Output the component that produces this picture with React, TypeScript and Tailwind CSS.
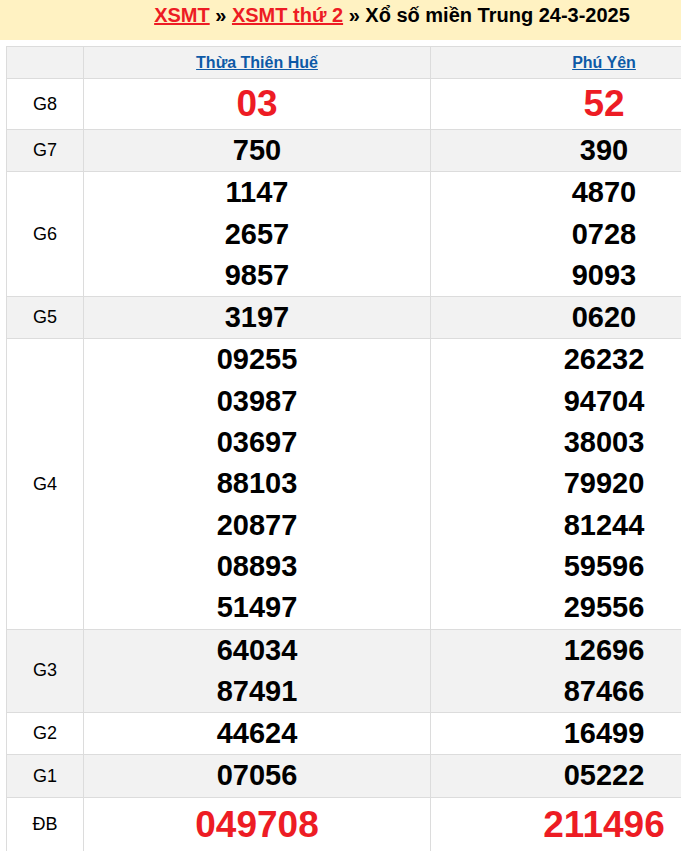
type Prize = {
  label: string;
  hue: [string[], string[]];
  big?: "g8" | "db";
};

const PROVINCES = ["Thừa Thiên Huế", "Phú Yên"];

const PRIZES: Prize[] = [
  { label: "G8", hue: [["03"], ["52"]], big: "g8" },
  { label: "G7", hue: [["750"], ["390"]] },
  { label: "G6", hue: [["1147", "2657", "9857"], ["4870", "0728", "9093"]] },
  { label: "G5", hue: [["3197"], ["0620"]] },
  {
    label: "G4",
    hue: [
      ["09255", "03987", "03697", "88103", "20877", "08893", "51497"],
      ["26232", "94704", "38003", "79920", "81244", "59596", "29556"],
    ],
  },
  { label: "G3", hue: [["64034", "87491"], ["12696", "87466"]] },
  { label: "G2", hue: [["44624"], ["16499"]] },
  { label: "G1", hue: [["07056"], ["05222"]] },
  { label: "ĐB", hue: [["049708"], ["211496"]], big: "db" },
];

function Numbers({ values, big }: { values: string[]; big?: Prize["big"] }) {
  const cls =
    big === "g8"
      ? "text-[37px] leading-[50px] font-bold text-[#ed1c24]"
      : big === "db"
        ? "text-[37px] leading-[53px] font-bold text-[#ed1c24]"
        : "text-[29px] leading-[41.3px] font-bold text-black";
  return (
    <td className="border border-[#dcdcdc] p-0 text-center align-middle">
      {values.map((v, i) => (
        <div key={i} className={cls}>
          {v}
        </div>
      ))}
    </td>
  );
}

export default function App() {
  return (
    <div className="h-[851px] w-[681px] overflow-hidden bg-white font-['Liberation_Sans',Arial,sans-serif]">
      <div className="w-[784px]">
        <div className="h-[40px] bg-[#fff2c2] pt-[3px] text-center text-[20px] leading-6 font-bold text-black">
          <a className="text-[#ed1c24] underline">XSMT</a> »{" "}
          <a className="text-[#ed1c24] underline">XSMT thứ 2</a> » Xổ số miền Trung 24-3-2025
        </div>
        <div className="px-[6px] pt-[6px]">
          <table className="w-full table-fixed border-collapse">
            <colgroup>
              <col className="w-[77px]" />
              <col />
              <col />
            </colgroup>
            <thead>
              <tr className="bg-[#f2f2f2]">
                <th className="h-[32px] border border-[#dcdcdc]" />
                {PROVINCES.map((p) => (
                  <th key={p} className="h-[32px] border border-[#dcdcdc] text-center text-[16px] font-bold">
                    <a className="text-[#0d5aa7] underline">{p}</a>
                  </th>
                ))}
              </tr>
            </thead>
            <tbody>
              {PRIZES.map((prize, idx) => (
                <tr key={prize.label} className={idx % 2 === 1 ? "bg-[#f2f2f2]" : "bg-white"}>
                  <td className="border border-[#dcdcdc] text-center align-middle text-[18px] text-black">
                    {prize.label}
                  </td>
                  <Numbers values={prize.hue[0]} big={prize.big} />
                  <Numbers values={prize.hue[1]} big={prize.big} />
                </tr>
              ))}
            </tbody>
          </table>
        </div>
      </div>
    </div>
  );
}
